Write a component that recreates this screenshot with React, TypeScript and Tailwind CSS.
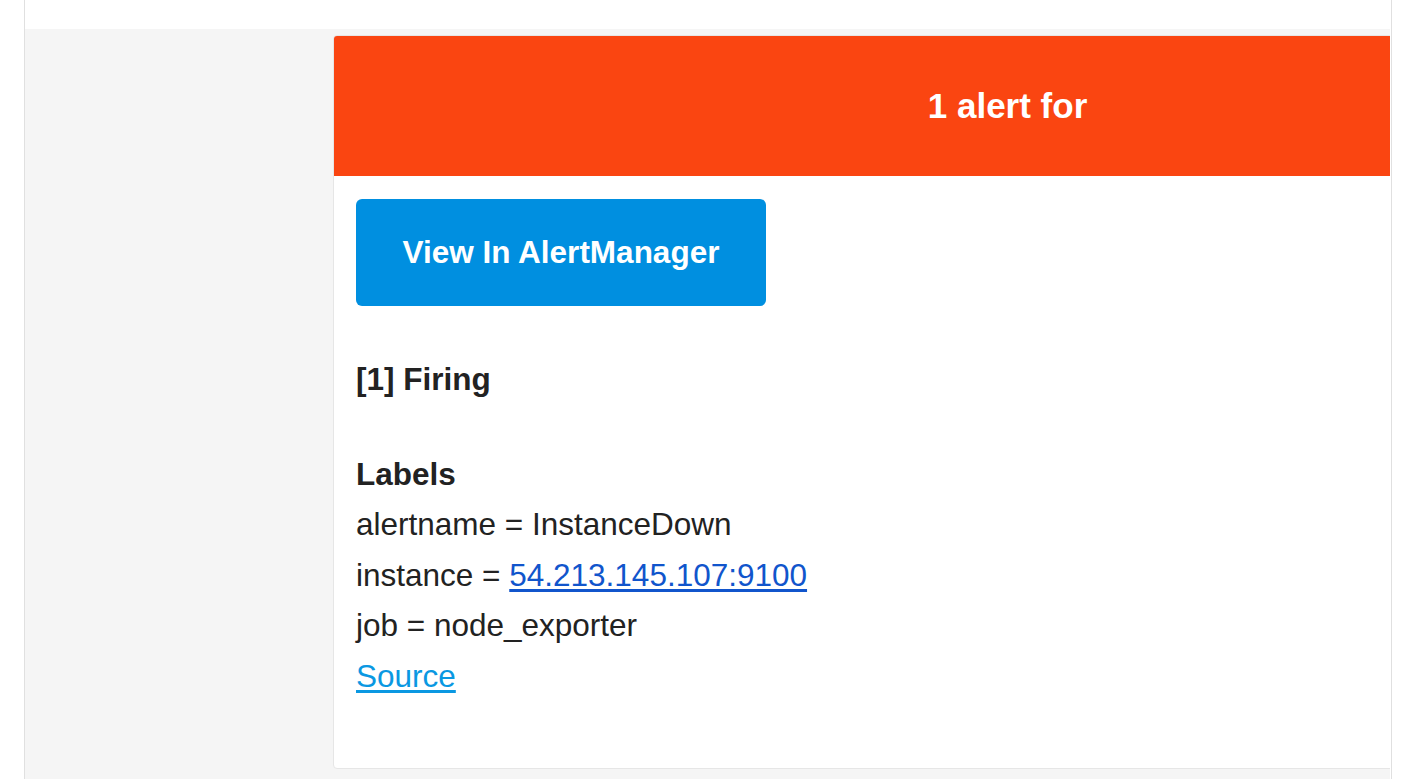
import React from "react";

export default function App() {
  return (
    <div
      className="w-[1401px] h-[779px] bg-white overflow-hidden flex"
      style={{ fontFamily: '"Liberation Sans", Arial, Helvetica, sans-serif' }}
    >
      <div className="w-[24px] shrink-0" />
      <div className="w-[1368px] shrink-0 border-l border-r border-[#e0e0e0] flex flex-col">
        <div className="h-[29px] shrink-0 bg-white" />
        <div className="flex-1 bg-[#f5f5f5] mr-[1px] overflow-hidden pl-[308px] pt-[6px]">
          <div className="w-[1349px] shrink-0 bg-white border border-[#e6e6e6] rounded-[4px] overflow-hidden">
            <div className="h-[140px] bg-[#fa4511] flex items-center justify-center text-white font-bold text-[35px] leading-[50px]">
              1 alert for
            </div>
            <div className="pl-[22px] pt-[23px] pb-[67px] text-[#222222] text-[31.5px] leading-[50.4px]">
              <div className="w-[410px] h-[107px] rounded-[6px] bg-[#008fe0] flex items-center justify-center text-white font-bold text-[31.5px]">
                View In AlertManager
              </div>
              <div className="mt-[48px] font-bold">[1] Firing</div>
              <div className="mt-[44.6px] font-bold">Labels</div>
              <div>alertname = InstanceDown</div>
              <div>
                instance ={" "}
                <a className="text-[#1155cc] underline underline-offset-[3px]" href="#">
                  54.213.145.107:9100
                </a>
              </div>
              <div>job = node_exporter</div>
              <div>
                <a className="text-[#0a98e2] underline underline-offset-[3px]" href="#">
                  Source
                </a>
              </div>
            </div>
          </div>
        </div>
      </div>
    </div>
  );
}
